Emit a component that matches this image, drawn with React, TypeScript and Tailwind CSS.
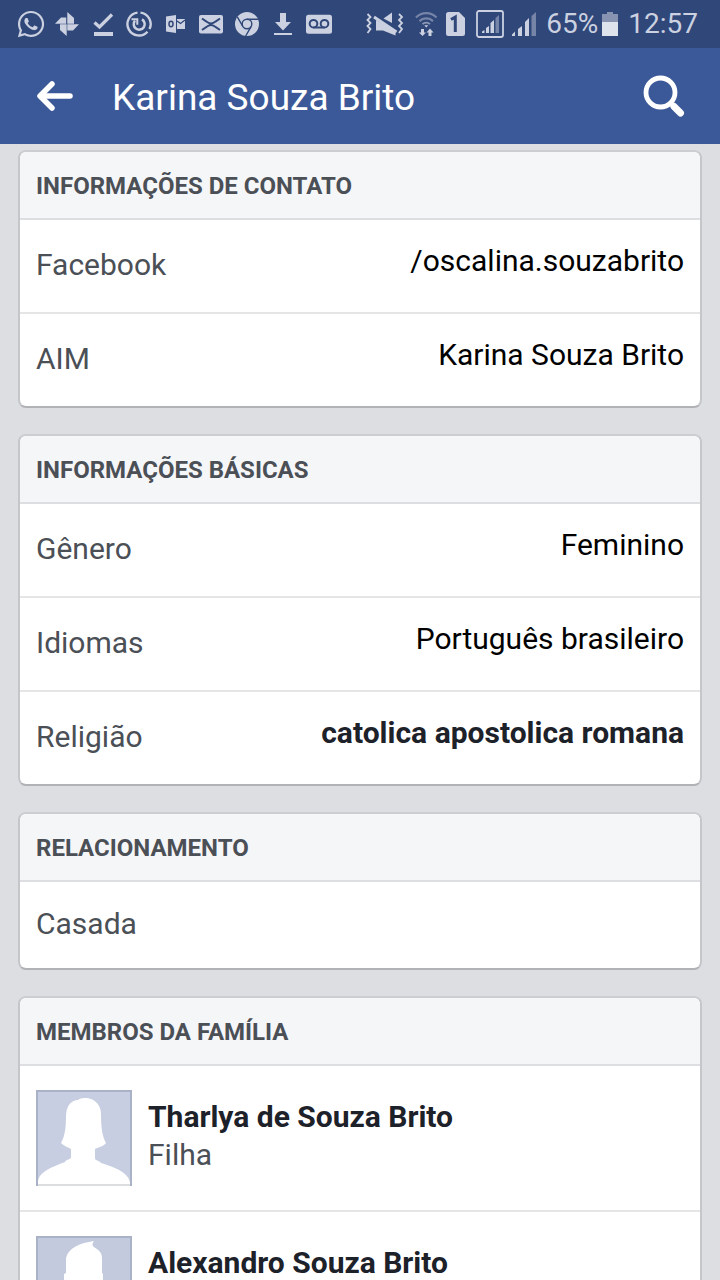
import type { ReactNode } from "react";
import { FaWhatsapp } from "react-icons/fa";

const contact = [
  { label: "Facebook", value: "/oscalina.souzabrito" },
  { label: "AIM", value: "Karina Souza Brito" },
];

const basics = [
  { label: "Gênero", value: "Feminino" },
  { label: "Idiomas", value: "Português brasileiro" },
  { label: "Religião", value: "catolica apostolica romana", strong: true },
];

function Glyph({ children }: { children: ReactNode }) {
  return (
    <span className="flex w-9 justify-center">
      <svg viewBox="0 0 30 30" className="size-[30px]" fill="currentColor" aria-hidden>
        {children}
      </svg>
    </span>
  );
}

function Notifications() {
  const bg = "#304779";
  return (
    <div className="flex items-center">
      <span className="flex w-9 justify-center">
        <FaWhatsapp className="size-[30px]" aria-hidden />
      </span>
      {/* Photos */}
      <Glyph>
        <path d="M15.300 3 22 9v5.700h-6.700zM15.300 15.300H27L21 21.500h-5.700zM14.700 27 8 21v-5.700h6.700zM3 14.700 9 8.500h5.200v6.200z" />
      </Glyph>
      <Glyph>
        <path d="m6.500 13.500 5 4.500L24 5.500" fill="none" stroke="currentColor" strokeWidth="3.200" />
        <path d="M6 23h19v4H6z" />
      </Glyph>
      {/* Data saver */}
      <Glyph>
        <g fill="none" stroke="currentColor">
          <path d="M16.500 3.600A11.500 11.500 0 0 1 25.500 20M23.500 22.700A11.500 11.500 0 1 1 13.500 3.600" strokeWidth="2.400" />
          <path d="M18 10.400a5.500 5.500 0 1 1-7 1.200" strokeWidth="2.500" />
          <path d="M7.500 10.200h5.800v5.600" strokeWidth="2" />
        </g>
      </Glyph>
      {/* Outlook */}
      <Glyph>
        <path d="M6 7.500 16 6v18L6 22.500zM17 10h8v10h-8z" />
        <ellipse cx="11" cy="15" rx="2" ry="2.700" fill="none" stroke={bg} strokeWidth="1.500" />
        <path d="m17 12 3.500 2.500L25 11" fill="none" stroke={bg} strokeWidth="1.300" />
      </Glyph>
      {/* Mail */}
      <Glyph>
        <rect x="3" y="6" width="24" height="18.500" rx="2" />
        <path
          d="M6 9.500c4 3 6.500 5 9 5s5-2 9-5M6 21c4-3 6.500-5 9-5s5 2 9 5"
          fill="none"
          stroke={bg}
          strokeWidth="2"
        />
      </Glyph>
      {/* Chrome */}
      <Glyph>
        <circle cx="15" cy="15" r="12" />
        <g fill="none" stroke={bg} strokeWidth="1.400">
          <circle cx="15" cy="15" r="4.800" />
          <path d="M15 10.200h11M10.800 17.400 5.300 7.800M19.200 17.400 13.700 27" />
        </g>
      </Glyph>
      <Glyph>
        <path d="M12 4h6v9h5l-8 8.500L7 13h5zM6 24h18v2H6z" />
      </Glyph>
      {/* Voicemail */}
      <Glyph>
        <rect x="2" y="5.700" width="26" height="19" rx="2.500" />
        <g fill="none" stroke={bg} strokeWidth="2">
          <circle cx="9.500" cy="14.700" r="3.800" />
          <circle cx="20.500" cy="14.700" r="3.800" />
          <path d="M9.500 18.500h11" />
        </g>
      </Glyph>
    </div>
  );
}

function SystemStatus() {
  return (
    <div className="flex items-center">
      {/* Vibrate, sound off */}
      <svg viewBox="0 0 38 30" className="h-[30px] w-[38px]" fill="currentColor" aria-hidden>
        <path
          d="m1.500 5 3 3-3 3 3 3-3 3 3 3-3 4M33 5l3 3-3 3 3 3-3 3 3 3-3 4"
          fill="none"
          stroke="currentColor"
          strokeWidth="1.800"
        />
        <path d="m17.500 9.500 8.500-6V14zM10 11v10.500h7l12.500 5V22z" />
        <path d="m8 8 22.500 15" stroke="currentColor" strokeWidth="3" />
      </svg>
      <svg viewBox="0 0 28 30" className="ml-2 h-[30px] w-7" fill="currentColor" aria-hidden>
        <g fill="none" stroke="currentColor" strokeWidth="2.200" opacity="0.45">
          <path d="M4 8.500a14 14 0 0 1 20.500 0M7.500 12.200a9.500 9.500 0 0 1 13.500 0" />
        </g>
        <path d="M10.500 15.200a5.500 5.500 0 0 1 7.500 0" fill="none" stroke="currentColor" strokeWidth="1.800" opacity="0.6" />
        <path d="m12.300 16.300 2 2.200 2-2.200zM9 20h3v3.500h2L10.500 27 7 23.500h2zM16.500 27v-3.500h-2L18 19.500l3.500 4h-2V27z" />
      </svg>
      <svg viewBox="0 0 19 24" className="ml-1.5 h-6 w-[19px]" aria-hidden>
        <path d="M2.500 0h10.500L19 6v15.500a2.500 2.500 0 0 1-2.500 2.500h-14A2.500 2.500 0 0 1 0 21.500v-19A2.500 2.500 0 0 1 2.500 0z" fill="currentColor" />
        <path d="M5 7.500 9.300 5v15" fill="none" stroke="#304779" strokeWidth="3" />
      </svg>
      <svg viewBox="0 0 28 28" className="ml-[11px] size-7" fill="currentColor" aria-hidden>
        <rect x="1" y="1" width="26" height="26" rx="2" fill="none" stroke="currentColor" strokeWidth="1.800" />
        <path d="M6 21.500 8.500 20v3H6zM10 18l3-2v7h-3zM14.500 13l3.500-3v13h-3.500z" />
        <path d="m19.500 8 3.500-3v18h-3.500z" opacity="0.45" />
      </svg>
      <svg viewBox="0 0 24 24" className="ml-2 size-6" fill="currentColor" aria-hidden>
        <path d="m0 22.500 3-3V24H0zM6 17l4-3v10H6zM13 10l4-4v18h-4z" />
        <path d="m19.500 4 4.500-4v24h-4.500z" opacity="0.45" />
      </svg>
      <span className="ml-2.5 text-[28px] leading-8">65%</span>
      <svg viewBox="0 0 16 24" className="ml-1 h-6 w-4" aria-hidden>
        <path d="M5 0h6v2h5v8H0V2h5z" fill="#8793b1" />
        <path d="M0 10h16v14H0z" fill="#dfe3ec" />
      </svg>
      <time className="ml-2.5 text-[28px] leading-8">12:57</time>
    </div>
  );
}

function Card({ title, children }: { title: string; children: ReactNode }) {
  return (
    <section className="shrink-0 overflow-hidden rounded-lg border-2 border-x-[#c5c6ca] border-t-[#cccdd0] border-b-[#b1b2b6] bg-white">
      <h2 className="border-b-2 border-[#dcdee1] bg-[#f5f6f8] px-4 pt-[18px] pb-4 text-2xl leading-8 font-bold text-[#4b4f56]">
        {title}
      </h2>
      {children}
    </section>
  );
}

function Fields({ items }: { items: { label: string; value: string; strong?: boolean }[] }) {
  return (
    <dl className="divide-y-2 divide-[#e5e5e5]">
      {items.map(({ label, value, strong }) => (
        <div key={label} className="flex items-center justify-between gap-4 px-4 pt-[23px] pb-[25px]">
          <dt className="leading-[44px] text-[#4b4f56]">{label}</dt>
          <dd className={strong ? "pb-2 leading-9 font-bold text-[#1d2129]" : "pb-2 leading-9 text-black"}>
            {value}
          </dd>
        </div>
      ))}
    </dl>
  );
}

function Relative({ name, relation, color, path }: { name: string; relation?: string; color: string; path: string }) {
  return (
    <li className="flex items-start gap-4 px-4 py-6">
      <svg viewBox="0 0 96 96" className="size-24 shrink-0" aria-hidden>
        <path d="M0 0h96v96H0z" fill={color} />
        <path d={path} fill="#fff" />
        <path d="M1 96V1h94v95" fill="none" stroke="#a9b2c6" strokeWidth="2" />
        <path d="M2 95h92" stroke="#dcdddf" strokeWidth="2" />
      </svg>
      <div className="pt-2 leading-[38px]">
        <a href="#" className="block font-bold text-[#1d2129]">
          {name}
        </a>
        {relation && <p className="text-[#4b4f56]">{relation}</p>}
      </div>
    </li>
  );
}

export default function App() {
  return (
    <div className="flex h-screen flex-col bg-[#dcdee2] font-['Roboto',sans-serif] text-[30px]">
      <div className="flex h-12 shrink-0 items-center justify-between bg-[#304779] pr-[22px] pl-[13px] text-[#cbd1e0]">
        <Notifications />
        <SystemStatus />
      </div>

      <header className="flex h-24 shrink-0 items-center bg-[#3b5998] pr-[34px] pl-9 text-white">
        <button type="button" aria-label="Voltar">
          <svg viewBox="0 0 38 32" className="h-8 w-[38px]" fill="none" stroke="currentColor" strokeLinecap="round" aria-hidden>
            <path d="M16 4 4 16l12 12" strokeWidth="5.500" strokeLinejoin="round" />
            <path d="M5 16h29" strokeWidth="5.500" />
          </svg>
        </button>
        <h1 className="ml-[38px] flex-1 pt-1 text-[37px] leading-[48px]">Karina Souza Brito</h1>
        <button type="button" aria-label="Pesquisar">
          <svg viewBox="0 0 44 44" className="size-11" fill="none" stroke="currentColor" aria-hidden>
            <circle cx="18.500" cy="18.500" r="14.500" strokeWidth="4.800" />
            <path d="m28.500 29.500 3.500 3.500" strokeWidth="4" />
            <path d="m32 32.500 6.500 6.500" strokeWidth="7" strokeLinecap="round" />
          </svg>
        </button>
      </header>

      <main className="flex min-h-0 flex-1 flex-col gap-[26px] overflow-y-auto px-[18px] pt-1.5 [scrollbar-width:none]">
        <Card title="INFORMAÇÕES DE CONTATO">
          <Fields items={contact} />
        </Card>
        <Card title="INFORMAÇÕES BÁSICAS">
          <Fields items={basics} />
        </Card>
        <Card title="RELACIONAMENTO">
          <p className="px-4 pt-5 pb-[22px] leading-[44px] text-[#4b4f56]">Casada</p>
        </Card>
        <Card title="MEMBROS DA FAMÍLIA">
          <ul className="divide-y-2 divide-[#e5e5e5]">
            <Relative
              name="Tharlya de Souza Brito"
              relation="Filha"
              color="#c8cee1"
              path="M2 96V90c3-9 14-13 27-18 1-3 6-2 6-5V59c-3-2-7-3-10-6 4-7 5-16 5-26C30 15 36 10 42 10c2-2 6-2 9-2 9 1 14 8 14 16 0 12 1 22 5 29-2 3-7 4-11 6v9c0 3 4 2 6 5 13 4 27 9 29 19v4z"
            />
            <Relative
              name="Alexandro Souza Brito"
              color="#c3cade"
              path="M2 96V88c4-9 16-13 28-18 5-2 5-9 2-14-3-4-2-8-4-12v-6l2-1V22C32 12 44 7 58 5c-2 3-2 4 0 6 5 3 8 6 8 11v15l1 1v6c-2 4-1 8-4 12-3 5-3 12 2 14 12 5 25 9 29 18v8z"
            />
          </ul>
        </Card>
      </main>
    </div>
  );
}
